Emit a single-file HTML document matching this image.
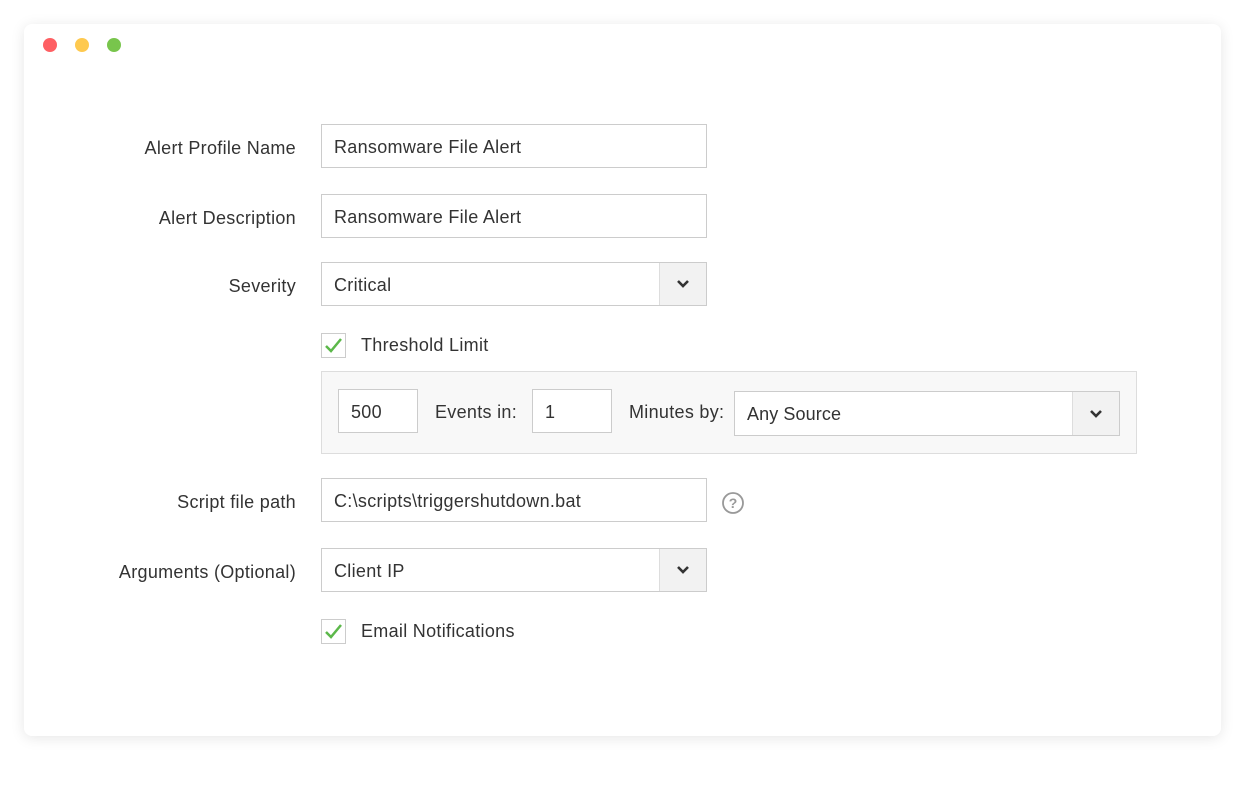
<!DOCTYPE html>
<html><head><meta charset="utf-8"><style>
*{box-sizing:border-box;margin:0;padding:0}
body{width:1245px;height:806px;background:#fff;font-family:"Liberation Sans",sans-serif;color:#333;position:relative;overflow:hidden}
.card{position:absolute;left:24px;top:24px;width:1197px;height:712px;background:#fff;border-radius:8px;box-shadow:0 2px 14px rgba(0,0,0,0.10)}
.dot{position:absolute;top:38px;width:14px;height:14px;border-radius:50%}
.lbl{position:absolute;right:949px;font-size:18px;letter-spacing:0.3px;color:#333;white-space:nowrap}
.inp{position:absolute;background:#fff;border:1px solid #ccc;font-size:18px;letter-spacing:0.3px;color:#333;padding-left:12px;padding-top:2px;display:flex;align-items:center}
.arrow{position:absolute;right:0;top:0;bottom:0;width:47px;background:#f2f2f2;border-left:1px solid #ddd;display:flex;align-items:center;justify-content:center}
.cb{position:absolute;left:321px;width:25px;height:25px;border:1px solid #ccc;background:#fff}
.cbl{position:absolute;left:361px;font-size:18px;letter-spacing:0.3px;color:#333}
.t{position:absolute;font-size:18px;letter-spacing:0.3px;color:#333}
</style></head><body>
<div class="card"></div>
<div class="dot" style="left:43px;background:#fe5f63"></div>
<div class="dot" style="left:75px;background:#fec94f"></div>
<div class="dot" style="left:107px;background:#78c54c"></div>

<div class="lbl" style="top:138px">Alert Profile Name</div>
<div class="inp" style="left:321px;top:124px;width:386px;height:44px">Ransomware File Alert</div>

<div class="lbl" style="top:208px">Alert Description</div>
<div class="inp" style="left:321px;top:194px;width:386px;height:44px">Ransomware File Alert</div>

<div class="lbl" style="top:276px">Severity</div>
<div class="inp" style="left:321px;top:262px;width:386px;height:44px">Critical<div class="arrow"><svg width="14" height="10" viewBox="0 0 14 10"><path d="M2 2l5 5 5-5" stroke="#333" stroke-width="2.6" fill="none"/></svg></div></div>

<div class="cb" style="top:333px"><svg width="23" height="23" viewBox="0 0 23 23"><path d="M4 12l5 5 10-12" stroke="#5cb84a" stroke-width="2.5" fill="none"/></svg></div>
<div class="cbl" style="top:335px">Threshold Limit</div>

<div style="position:absolute;left:321px;top:371px;width:816px;height:83px;background:#f8f8f8;border:1px solid #ddd"></div>
<div class="inp" style="left:338px;top:389px;width:80px;height:44px">500</div>
<div class="t" style="left:435px;top:402px">Events in:</div>
<div class="inp" style="left:532px;top:389px;width:80px;height:44px">1</div>
<div class="t" style="left:629px;top:402px">Minutes by:</div>
<div class="inp" style="left:734px;top:391px;width:386px;height:45px;font-size:18px;letter-spacing:0.1px">Any Source<div class="arrow"><svg width="14" height="10" viewBox="0 0 14 10"><path d="M2 2l5 5 5-5" stroke="#333" stroke-width="2.6" fill="none"/></svg></div></div>

<div class="lbl" style="top:492px">Script file path</div>
<div class="inp" style="left:321px;top:478px;width:386px;height:44px">C:\scripts\triggershutdown.bat</div>
<svg style="position:absolute;left:721px;top:491px" width="24" height="24" viewBox="0 0 24 24"><circle cx="12" cy="12" r="10" stroke="#999" stroke-width="1.8" fill="none"/><text x="12" y="17" text-anchor="middle" font-family="Liberation Sans" font-size="14" font-weight="bold" fill="#999">?</text></svg>

<div class="lbl" style="top:562px">Arguments (Optional)</div>
<div class="inp" style="left:321px;top:548px;width:386px;height:44px">Client IP<div class="arrow"><svg width="14" height="10" viewBox="0 0 14 10"><path d="M2 2l5 5 5-5" stroke="#333" stroke-width="2.6" fill="none"/></svg></div></div>

<div class="cb" style="top:619px"><svg width="23" height="23" viewBox="0 0 23 23"><path d="M4 12l5 5 10-12" stroke="#5cb84a" stroke-width="2.5" fill="none"/></svg></div>
<div class="cbl" style="top:621px">Email Notifications</div>
</body></html>
